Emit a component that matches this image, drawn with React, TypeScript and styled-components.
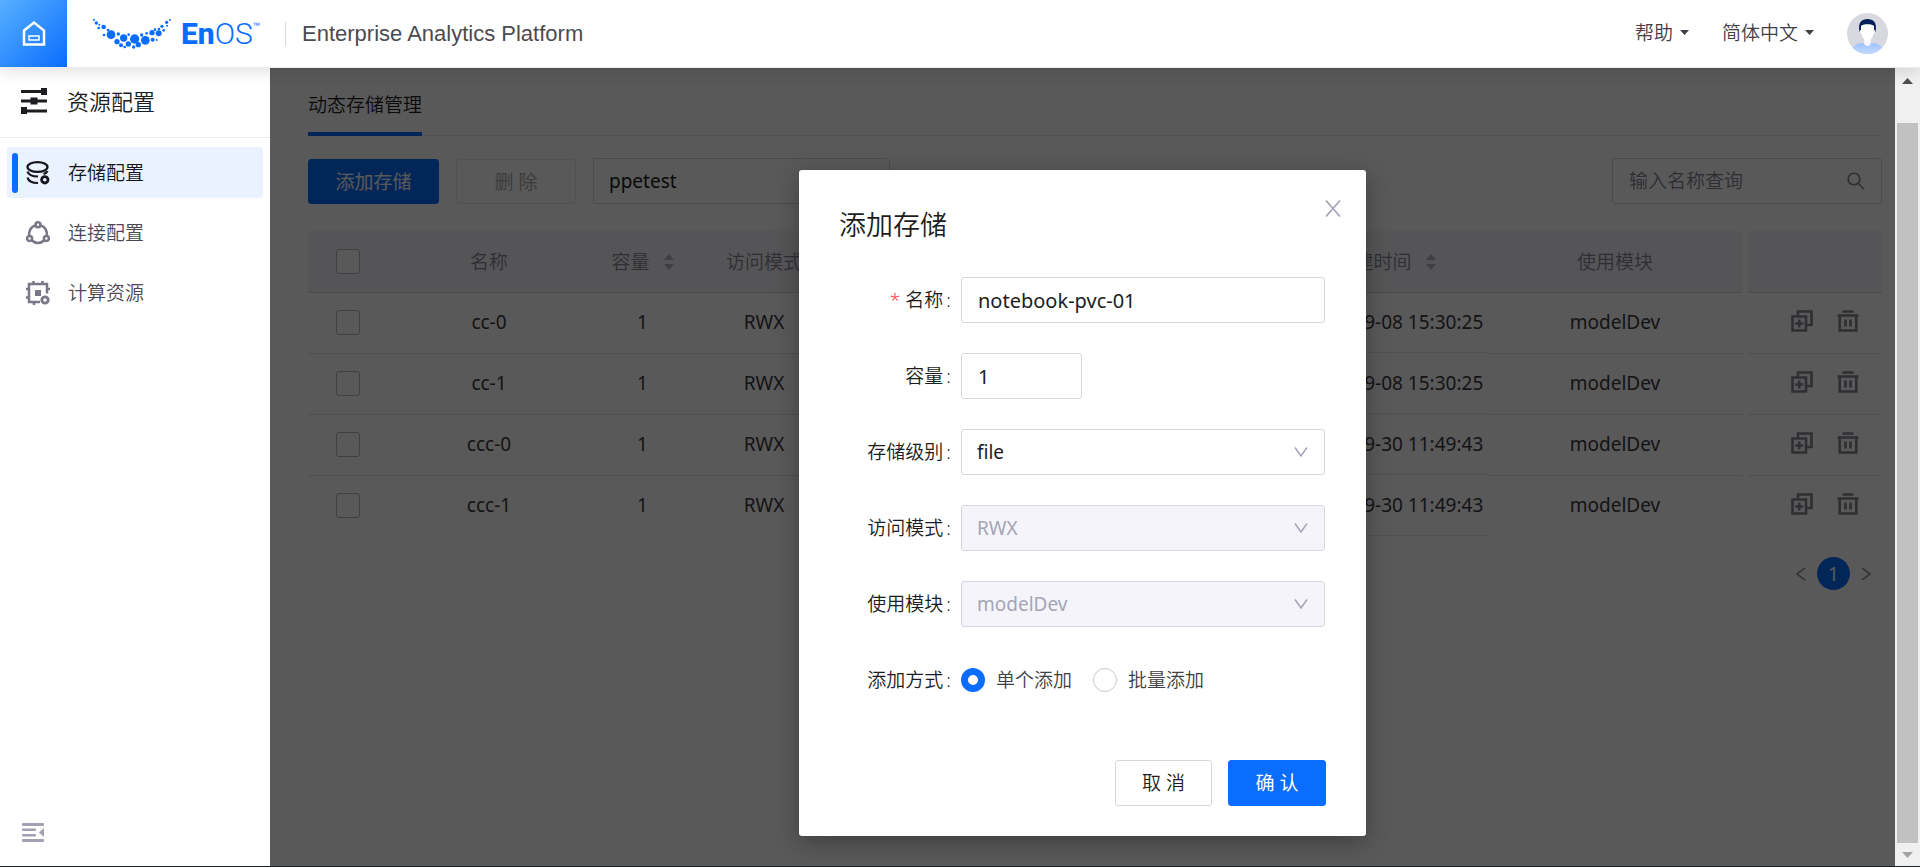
import React, { useState } from "react";
import styled, { createGlobalStyle, css } from "styled-components";

const color = {
  primary: "#0a6dff",
  text: "#1c1c21",
  textBody: "#3a3a40",
  textMuted: "#868692",
  textDisabled: "#a5a5b5",
  border: "#d6d6de",
  line: "#e6e6ec",
  fill: "#f4f4fa",
  icon: "#787888",
};

const GlobalStyle = createGlobalStyle`
  *, *::before, *::after { box-sizing: border-box; }
  body {
    margin: 0;
    color: ${color.text};
    font-family: "Noto Sans", "Noto Sans CJK SC", sans-serif;
    font-size: 19px;
    font-weight: 350;
    line-height: 28px;
  }
  button, input, select { font: inherit; color: inherit; margin: 0; }
  button { cursor: pointer; }
`;

const Page = styled.div`
  display: flex;
  flex-direction: column;
  height: 100vh;
  min-height: 860px;
  background: #fff;
  border-bottom: 1px solid #17272f;
`;

/* ---------- header ---------- */

const Header = styled.header`
  position: relative;
  z-index: 2;
  display: flex;
  align-items: center;
  height: 68px;
  flex: none;
  padding-right: 32px;
  background: #fff;
  border-bottom: 1px solid #ececf0;
  box-shadow: 0 2px 16px rgba(0, 0, 0, 0.14);
`;

const HomeLink = styled.a`
  display: flex;
  align-items: center;
  justify-content: center;
  width: 67px;
  height: 67px;
  margin-right: 26px;
  background: linear-gradient(135deg, #58b0ff, #0a6dff);
`;

const Brand = styled.div`
  display: flex;
  align-items: center;
  gap: 10px;
  width: 193px;
  border-right: 1px solid #d8d8de;
  height: 24px;
  color: ${color.primary};
`;

const BrandName = styled.span`
  display: flex;
  align-items: flex-start;
  font-family: Roboto, sans-serif;
  font-size: 30px;
  line-height: 32px;
  font-weight: 300;

  b { font-weight: 800; }
  small { font-size: 12px; line-height: 18px; font-weight: 400; }
`;

const ProductName = styled.span`
  flex: 1;
  padding-left: 16px;
  color: #4b4b50;
  font-family: "Liberation Sans", Arial, sans-serif;
  font-size: 22px;
  font-weight: 400;
`;

const HeaderMenu = styled.button`
  display: flex;
  align-items: center;
  gap: 7px;
  margin-right: 33px;
  padding: 0 0 2px;
  border: 0;
  background: none;
  color: #3f3f45;
`;

/* ---------- sidebar ---------- */

const Body = styled.div`
  display: flex;
  flex: 1;
  min-height: 0;
`;

const Sidebar = styled.aside`
  display: flex;
  flex-direction: column;
  width: 270px;
  flex: none;
`;

const SidebarTitle = styled.h2`
  display: flex;
  align-items: center;
  gap: 19px;
  height: 70px;
  margin: 0;
  padding: 0 20px 4px;
  border-bottom: 1px solid #ececf0;
  font-size: 22px;
  font-weight: 350;
`;

const Nav = styled.nav`
  display: flex;
  flex-direction: column;
  flex: 1;
  gap: 9px;
  padding: 9px 7px;
`;

const NavItem = styled.a<{ $active?: boolean }>`
  display: flex;
  align-items: center;
  height: 51px;
  padding-left: 5px;
  border-radius: 3px;
  color: ${(p) => (p.$active ? "#15151c" : "#4a4a54")};
  background: ${(p) => (p.$active ? "#eaf2ff" : "transparent")};
  text-decoration: none;

  &::before {
    content: "";
    width: 6px;
    height: 40px;
    margin-right: 8px;
    border-radius: 3px;
    background: ${(p) => (p.$active ? color.primary : "transparent")};
  }
  svg { margin-right: 18px; color: ${(p) => (p.$active ? "#15151c" : color.icon)}; }
`;

const CollapseButton = styled.button`
  display: flex;
  align-self: flex-start;
  margin: 0 0 21px 20px;
  padding: 0;
  border: 0;
  background: none;
  color: #a0a0b0;
`;

/* ---------- main area ---------- */

const Main = styled.main`
  position: relative;
  flex: 1;
  min-width: 0;
  padding: 0 13px 0 38px;
  overflow: hidden;
`;

const Tabs = styled.div`
  display: flex;
  height: 68px;
  border-bottom: 1px solid ${color.line};
`;

const Tab = styled.button`
  height: 68px;
  padding: 9px 0 0;
  border: 0;
  border-bottom: 4px solid ${color.primary};
  background: none;
`;

const Toolbar = styled.div`
  display: flex;
  align-items: flex-end;
  gap: 17px;
  padding: 22px 0 27px;
`;

const Button = styled.button<{ $primary?: boolean; $width: number }>`
  width: ${(p) => p.$width}px;
  height: 46px;
  padding: 0;
  border: 1px solid ${(p) => (p.$primary ? color.primary : color.border)};
  border-radius: 3px;
  background: ${(p) => (p.$primary ? color.primary : "#fff")};
  color: ${(p) => (p.$primary ? "#fff" : color.text)};
  font-weight: ${(p) => (p.$primary ? 400 : 350)};

  &:disabled {
    border-color: #e8e8ee;
    color: #a8a8ae;
  }
`;

const ToolbarButton = styled(Button)`
  height: 45px;
`;

const controlBox = css`
  height: 46px;
  padding: 0 16px;
  border: 1px solid ${color.border};
  border-radius: 3px;
  background: #fff;
  outline: none;
  font-weight: 400;
`;

const SelectWrap = styled.div<{ $width?: number }>`
  display: grid;
  align-items: center;
  width: ${(p) => (p.$width ? p.$width + "px" : "100%")};
  color: ${color.textDisabled};

  > * { grid-area: 1 / 1; }
  svg { justify-self: end; margin-right: 17px; pointer-events: none; }
`;

const NativeSelect = styled.select`
  ${controlBox}
  width: 100%;
  padding: 0 15px;
  appearance: none;
  color: ${color.text};

  &:disabled {
    opacity: 1;
    background: ${color.fill};
    color: ${color.textDisabled};
  }
`;

const SearchBox = styled.label`
  ${controlBox}
  display: flex;
  align-items: center;
  width: 270px;
  margin-left: auto;
  color: ${color.textMuted};

  input {
    flex: 1;
    min-width: 0;
    padding: 0;
    border: 0;
    outline: none;
    background: none;
    font-weight: 350;
  }
  input::placeholder { color: #85858f; opacity: 1; }
`;

const Table = styled.table`
  width: 100%;
  table-layout: fixed;
  border-spacing: 0;
  text-align: center;
  white-space: nowrap;
`;

const HeadCell = styled.th`
  height: 62px;
  padding: 0;
  border-bottom: 1px solid ${color.border};
  background: ${color.fill};
  color: ${color.textMuted};
  font-weight: 350;
`;

const Cell = styled.td<{ $raised?: boolean; $last?: boolean }>`
  height: 61px;
  padding: 0 0 2px;
  border-bottom: 1px solid ${(p) => (p.$raised || p.$last ? "transparent" : color.line)};
  box-shadow: ${(p) => (p.$raised ? `inset 0 -1px 0 ${color.line}` : "none")};
  color: ${color.textBody};
  font-weight: 400;
`;

const ColumnGap = styled.td`
  padding: 0;
`;

const SortLabel = styled.span<{ $inset?: boolean }>`
  display: inline-flex;
  align-items: center;
  gap: 14px;
  margin-right: ${(p) => (p.$inset ? 16 : 0)}px;
`;

const Checkbox = styled.input`
  display: block;
  width: 24px;
  height: 25px;
  margin: 0 auto;
  appearance: none;
  border: 1px solid #b8b8c2;
  border-radius: 3px;
  background: #fff;
`;

const RowActions = styled.div`
  display: flex;
  justify-content: center;
  gap: 24px;
  padding: 0 0 3px 20px;
`;

const IconButton = styled.button`
  display: flex;
  padding: 0;
  border: 0;
  background: none;
  color: ${color.textMuted};
`;

const Pagination = styled.nav`
  display: flex;
  align-items: center;
  justify-content: flex-end;
  gap: 11px;
  padding: 20px 11px 0 0;
`;

const PageNumber = styled.button`
  width: 33px;
  height: 33px;
  padding: 0;
  border: 0;
  border-radius: 50%;
  background: ${color.primary};
  color: #fff;
  font-weight: 400;
  line-height: 30px;
`;

const ScrollTrack = styled.div`
  display: flex;
  flex-direction: column;
  width: 25px;
  flex: none;
  background: #f0f0f0;
`;

const ScrollArrow = styled.div<{ $dim?: boolean }>`
  display: flex;
  align-items: center;
  justify-content: center;
  height: ${(p) => (p.$dim ? 23 : 25)}px;
  color: ${(p) => (p.$dim ? "#a3a3a3" : "#4f4f4f")};
`;

const ScrollThumb = styled.div`
  flex: 1;
  margin: 30px 2px 0;
  background: #c1c1c1;
`;

/* ---------- dialog ---------- */

const Overlay = styled.div`
  position: absolute;
  inset: 0;
  display: flex;
  align-items: flex-start;
  justify-content: center;
  padding-top: 102px;
  background: rgba(0, 0, 0, 0.65);
`;

const Dialog = styled.form`
  width: 567px;
  padding: 30px 40px;
  border-radius: 3px;
  background: #fff;
  box-shadow: 0 6px 24px rgba(0, 0, 0, 0.3);
`;

const DialogHead = styled.div`
  display: flex;
  align-items: flex-start;
  justify-content: space-between;
  margin-bottom: 27px;
`;

const DialogTitle = styled.h1`
  margin: 0;
  padding: 5px 0;
  font-size: 27px;
  line-height: 40px;
  font-weight: 350;
`;

const CloseButton = styled(IconButton)`
  margin-right: -15px;
  color: ${color.textDisabled};
`;

const Fields = styled.div`
  display: flex;
  flex-direction: column;
  gap: 30px;
`;

const Field = styled.div`
  display: grid;
  grid-template-columns: 112px 364px;
  column-gap: 10px;
  align-items: center;
  min-height: 46px;
`;

const FieldLabel = styled.label<{ $required?: boolean }>`
  text-align: right;

  &::before {
    content: ${(p) => (p.$required ? '"*"' : "none")};
    margin-right: 5px;
    color: #ff3b42;
  }
  &::after {
    content: ":";
    margin-left: 3px;
  }
`;

const TextInput = styled.input<{ $short?: boolean }>`
  ${controlBox}
  width: ${(p) => (p.$short ? 121 : 364)}px;
  font-size: 20px;
`;

const RadioGroup = styled.div`
  display: flex;
  gap: 21px;
`;

const RadioLabel = styled.label`
  display: flex;
  align-items: center;
  gap: 11px;
  color: #3f3f46;

  input {
    width: 24px;
    height: 24px;
    appearance: none;
    border: 1px solid #c8c8d2;
    border-radius: 50%;
    background: #fff;
  }
  input:checked { border: 7px solid ${color.primary}; }
`;

const DialogFoot = styled.div`
  display: flex;
  justify-content: flex-end;
  gap: 16px;
  margin-top: 57px;
`;

/* ---------- drawings ---------- */

const logoDots: [number, number, number][] = [
  [18, 27, 3], [25, 36, 5], [34, 41, 3], [32, 51, 4], [47, 48, 7], [60, 57, 4], [48, 72, 4],
  [69, 71, 13], [91, 69, 5], [87, 92, 8], [107, 81, 11], [99, 103, 6], [110, 108, 4],
  [122, 71, 4], [121, 99, 8], [140, 84, 14], [137, 108, 5], [151, 101, 8], [161, 72, 5],
  [172, 88, 13], [176, 67, 4], [192, 65, 8], [194, 86, 6], [206, 87, 3], [212, 67, 9],
  [201, 56, 4], [213, 54, 4], [227, 58, 4], [222, 46, 5], [237, 44, 3], [236, 34, 5], [246, 27, 3],
];

const LogoMark = () => (
  <svg width="78" height="32" viewBox="15 21 234 96" fill="currentColor" aria-hidden="true">
    {logoDots.map(([x, y, r]) => (
      <circle key={`${x}-${y}`} cx={x} cy={y} r={r} />
    ))}
  </svg>
);

const HomeIcon = () => (
  <svg width="24" height="26" viewBox="0 0 24 26" fill="none" stroke="#fff" strokeWidth="2.500">
    <path d="M2 9.500 12 1.600l10 7.900V23.500H2z" />
    <path d="M7 15h10v4H7z" strokeWidth="1.500" />
  </svg>
);

const SlidersIcon = () => (
  <svg width="28" height="28" viewBox="0 0 28 28" fill="currentColor">
    <path d="M1 3h20V1h6v7h-6V6H1zM1 12.500h9.500v-2h7v2H27v3h-9.500v2h-7v-2H1zM1 20h6v2.500h20v3H7V27H1z" />
  </svg>
);

const StorageIcon = () => (
  <svg width="24" height="24" viewBox="0 0 24 24" fill="none" stroke="currentColor" strokeWidth="2.200">
    <ellipse cx="11.500" cy="6" rx="10" ry="4.800" />
    <path d="M1.500 10.500c1 3.500 5 5 10.500 5M1.500 16.500c1 4 5 5.500 10.500 5.500M17.500 13c2.200-.8 3.500-1.800 4-3" />
    <circle cx="18.800" cy="18.800" r="3.200" strokeWidth="2.800" />
  </svg>
);

const LinkIcon = () => (
  <svg width="24" height="24" viewBox="0 0 24 24" fill="none" stroke="currentColor" strokeWidth="2.500">
    <circle cx="12" cy="3.800" r="2.500" />
    <circle cx="3.600" cy="17.500" r="2.500" />
    <circle cx="20.400" cy="17.500" r="2.500" />
    <path d="M9.500 4.500C5 5.500 2.500 10 3.200 15M14.500 4.500c4.500 1 7 5.500 6.300 10.500M6 19.500c3.500 3.300 8.500 3.300 12 0" />
  </svg>
);

const ComputeIcon = () => (
  <svg width="24" height="24" viewBox="0 0 24 24" fill="none" stroke="currentColor" strokeWidth="2.500">
    <path d="M21 12.500V3H3v18h11" />
    <path d="M7.500 0v3M16.500 0v3M0 8h3M0 16.500h3M21 8h3M8 21v3" />
    <path d="M9 9h6v6H9z" fill="currentColor" stroke="none" />
    <circle cx="19" cy="19" r="3.200" strokeWidth="2.800" />
  </svg>
);

const CollapseIcon = () => (
  <svg width="26" height="24" viewBox="0 0 26 24" fill="currentColor">
    <rect x="2" y="2" width="22" height="3" rx="1" />
    <rect x="2" y="7.500" width="14" height="2.500" rx="1" />
    <rect x="2" y="13" width="14" height="2.500" rx="1" />
    <rect x="2" y="18" width="22" height="3" rx="1" />
    <path d="M24 7v9l-5-4.500z" />
  </svg>
);

const CaretIcon = ({ up = false, size = 9 }: { up?: boolean; size?: number }) => (
  <svg width={size} height={size === 9 ? 5 : 6} viewBox="0 0 10 6" preserveAspectRatio="none" fill="currentColor">
    <path d={up ? "M5 0 10 6H0z" : "M0 0h10L5 6z"} />
  </svg>
);

const AvatarIcon = () => (
  <svg width="41" height="41" viewBox="0 0 41 41" role="img" aria-label="avatar">
    <defs>
      <clipPath id="avatar-clip"><circle cx="20.500" cy="20.500" r="20.500" /></clipPath>
      <linearGradient id="avatar-body" x1="0" y1="0" x2="0" y2="1">
        <stop offset="0" stopColor="#9cc2ff" />
        <stop offset="1" stopColor="#c3daff" />
      </linearGradient>
    </defs>
    <g clipPath="url(#avatar-clip)">
      <rect width="41" height="41" fill="#d8d8e0" />
      <path d="M4 41c0-8 6-11 13-11h7c7 0 13 3 13 11z" fill="url(#avatar-body)" />
      <path d="M17 24h7v6c0 4-7 4-7 0z" fill="#f4f6fb" />
      <path d="M12.500 19C10.500 9 15 6 20.500 6S30.500 9 28.500 19z" fill="#06205c" />
      <path d="M14 13c1.500-2.500 11.500-2.500 13 0v4c2 0 1.500 3-.3 3.200C26 24 23.500 28 20.500 28s-5.500-4-6.200-7.800C12.500 20 12 17 14 17z" fill="#fff" />
    </g>
  </svg>
);

const SortIcon = () => (
  <svg width="10" height="16" viewBox="0 0 10 16" fill="#b4b4be">
    <path d="M5 0 10 6H0zM0 10h10l-5 6z" />
  </svg>
);

const SearchIcon = () => (
  <svg width="18" height="18" viewBox="0 0 18 18" fill="none" stroke="currentColor" strokeWidth="1.600">
    <circle cx="7" cy="7" r="5.800" />
    <path d="m11.200 11.200 6 6" />
  </svg>
);

const ChevronIcon = () => (
  <svg width="14" height="10" viewBox="0 0 14 10" fill="none" stroke="currentColor" strokeWidth="1.500">
    <path d="m1 .5 6 8.500L13 .5" />
  </svg>
);

const CloseIcon = () => (
  <svg width="16" height="17" viewBox="0 0 16 17" fill="none" stroke="currentColor" strokeWidth="1.700">
    <path d="m1 .5 14 16M15 .5l-14 16" />
  </svg>
);

const CopyIcon = () => (
  <svg width="22" height="22" viewBox="0 0 22 22" fill="none" stroke="currentColor" strokeWidth="2.600">
    <path d="M1.500 6.500h13.500v14h-13.500z" />
    <path d="M7 6.500v-5h13.500V15H16M8.250 9.500v8M4.250 13.500h8" />
  </svg>
);

const TrashIcon = () => (
  <svg width="22" height="22" viewBox="0 0 22 22" fill="none" stroke="currentColor" strokeWidth="2.600">
    <path d="M5.500 1.500h11M.5 5.500h21M2.700 6v14.500h16.600V6M8.500 9.500v7M13.500 9.500v7" />
  </svg>
);

const AngleIcon = ({ right = false }: { right?: boolean }) => (
  <svg width="10" height="14" viewBox="0 0 10 14" fill="none" stroke="currentColor" strokeWidth="1.500">
    <path d={right ? "m1 1 8 6-8 6" : "M9 1 1 7l8 6"} />
  </svg>
);

/* ---------- page ---------- */

const navItems = [
  { label: "存储配置", icon: <StorageIcon />, active: true },
  { label: "连接配置", icon: <LinkIcon /> },
  { label: "计算资源", icon: <ComputeIcon /> },
];

const rows = [
  { name: "cc-0", created: "2021-09-08 15:30:25" },
  { name: "cc-1", created: "2021-09-08 15:30:25" },
  { name: "ccc-0", created: "2021-09-30 11:49:43" },
  { name: "ccc-1", created: "2021-09-30 11:49:43" },
];

type SelectProps = { id: string; value: string; disabled?: boolean; width?: number };

const Select = ({ id, value, disabled, width }: SelectProps) => (
  <SelectWrap $width={width}>
    <NativeSelect id={id} defaultValue={value} disabled={disabled} aria-label={width ? value : undefined}>
      <option>{value}</option>
    </NativeSelect>
    <ChevronIcon />
  </SelectWrap>
);

const AddStorageDialog = () => {
  const [mode, setMode] = useState("single");
  return (
    <Overlay>
      <Dialog role="dialog" aria-labelledby="dialog-title" onSubmit={(e) => e.preventDefault()}>
        <DialogHead>
          <DialogTitle id="dialog-title">添加存储</DialogTitle>
          <CloseButton type="button" aria-label="关闭"><CloseIcon /></CloseButton>
        </DialogHead>
        <Fields>
          <Field>
            <FieldLabel htmlFor="name" $required>名称</FieldLabel>
            <TextInput id="name" defaultValue="notebook-pvc-01" />
          </Field>
          <Field>
            <FieldLabel htmlFor="size">容量</FieldLabel>
            <TextInput id="size" defaultValue="1" $short />
          </Field>
          <Field>
            <FieldLabel htmlFor="level">存储级别</FieldLabel>
            <Select id="level" value="file" />
          </Field>
          <Field>
            <FieldLabel htmlFor="access">访问模式</FieldLabel>
            <Select id="access" value="RWX" disabled />
          </Field>
          <Field>
            <FieldLabel htmlFor="module">使用模块</FieldLabel>
            <Select id="module" value="modelDev" disabled />
          </Field>
          <Field>
            <FieldLabel as="span" id="mode-label">添加方式</FieldLabel>
            <RadioGroup role="radiogroup" aria-labelledby="mode-label">
              <RadioLabel>
                <input type="radio" name="mode" checked={mode === "single"} onChange={() => setMode("single")} />
                单个添加
              </RadioLabel>
              <RadioLabel>
                <input type="radio" name="mode" checked={mode === "batch"} onChange={() => setMode("batch")} />
                批量添加
              </RadioLabel>
            </RadioGroup>
          </Field>
        </Fields>
        <DialogFoot>
          <Button type="button" $width={97}>取 消</Button>
          <Button type="submit" $primary $width={98}>确 认</Button>
        </DialogFoot>
      </Dialog>
    </Overlay>
  );
};

const StorageTable = () => (
  <Table>
    <colgroup>
      <col style={{ width: 80 }} />
      <col style={{ width: 202 }} />
      <col style={{ width: 105 }} />
      <col style={{ width: 138 }} />
      <col />
      <col style={{ width: 189 }} />
      <col style={{ width: 254 }} />
      <col style={{ width: 6 }} />
      <col style={{ width: 134 }} />
    </colgroup>
    <thead>
      <tr>
        <HeadCell><Checkbox type="checkbox" aria-label="全选" /></HeadCell>
        <HeadCell>名称</HeadCell>
        <HeadCell><SortLabel>容量<SortIcon /></SortLabel></HeadCell>
        <HeadCell>访问模式</HeadCell>
        <HeadCell />
        <HeadCell><SortLabel $inset>创建时间<SortIcon /></SortLabel></HeadCell>
        <HeadCell>使用模块</HeadCell>
        <ColumnGap />
        <HeadCell />
      </tr>
    </thead>
    <tbody>
      {rows.map((row, i) => {
        const last = i === rows.length - 1;
        return (
          <tr key={row.name}>
            <Cell $last={last}><Checkbox type="checkbox" aria-label={row.name} /></Cell>
            <Cell $last={last}>{row.name}</Cell>
            <Cell $last={last}>1</Cell>
            <Cell $last={last}>RWX</Cell>
            <Cell $last={last} />
            <Cell $raised>{row.created}</Cell>
            <Cell $last={last}>modelDev</Cell>
            <ColumnGap />
            <Cell $last={last}>
              <RowActions>
                <IconButton aria-label="复制"><CopyIcon /></IconButton>
                <IconButton aria-label="删除"><TrashIcon /></IconButton>
              </RowActions>
            </Cell>
          </tr>
        );
      })}
    </tbody>
  </Table>
);

export default function App() {
  return (
    <>
      <GlobalStyle />
      <Page>
        <Header>
          <HomeLink href="#" aria-label="首页"><HomeIcon /></HomeLink>
          <Brand>
            <LogoMark />
            <BrandName><b>En</b>OS<small>™</small></BrandName>
          </Brand>
          <ProductName>Enterprise Analytics Platform</ProductName>
          <HeaderMenu>帮助<CaretIcon /></HeaderMenu>
          <HeaderMenu>简体中文<CaretIcon /></HeaderMenu>
          <AvatarIcon />
        </Header>
        <Body>
          <Sidebar>
            <SidebarTitle><SlidersIcon />资源配置</SidebarTitle>
            <Nav>
              {navItems.map((item) => (
                <NavItem key={item.label} href="#" $active={item.active}>
                  {item.icon}
                  {item.label}
                </NavItem>
              ))}
            </Nav>
            <CollapseButton aria-label="收起"><CollapseIcon /></CollapseButton>
          </Sidebar>
          <Main>
            <Tabs role="tablist"><Tab role="tab" aria-selected="true">动态存储管理</Tab></Tabs>
            <Toolbar>
              <ToolbarButton $primary $width={131}>添加存储</ToolbarButton>
              <ToolbarButton disabled $width={120}>删 除</ToolbarButton>
              <Select id="namespace" value="ppetest" width={297} />
              <SearchBox>
                <input type="text" placeholder="输入名称查询" />
                <SearchIcon />
              </SearchBox>
            </Toolbar>
            <StorageTable />
            <Pagination>
              <IconButton aria-label="上一页"><AngleIcon /></IconButton>
              <PageNumber>1</PageNumber>
              <IconButton aria-label="下一页"><AngleIcon right /></IconButton>
            </Pagination>
            <AddStorageDialog />
          </Main>
          <ScrollTrack aria-hidden="true">
            <ScrollArrow><CaretIcon up size={11} /></ScrollArrow>
            <ScrollThumb />
            <ScrollArrow $dim><CaretIcon size={11} /></ScrollArrow>
          </ScrollTrack>
        </Body>
      </Page>
    </>
  );
}
